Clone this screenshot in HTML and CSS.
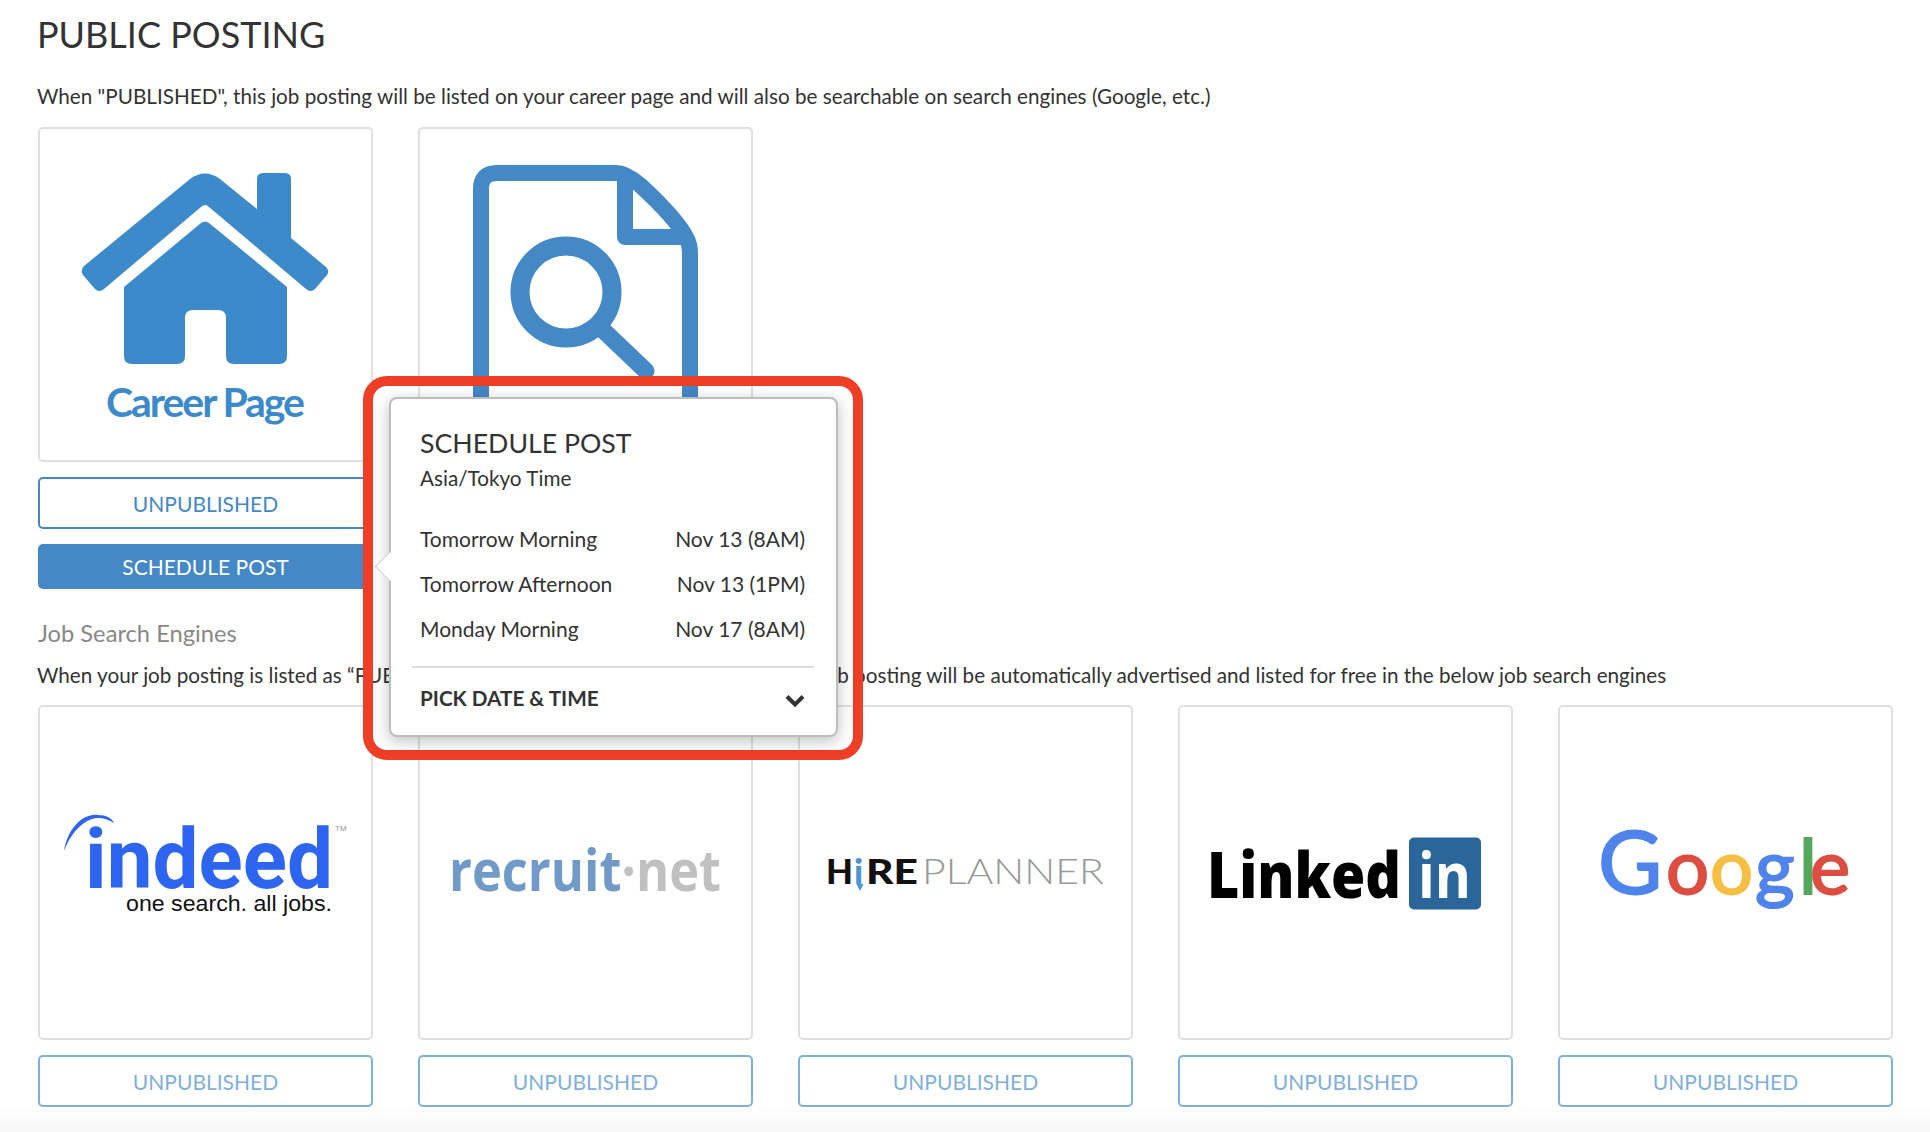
FILE: index.html
```html
<!DOCTYPE html>
<html lang="en">
  <head>
    <meta charset="UTF-8" />
    <meta name="viewport" content="width=device-width, initial-scale=1.0" />
    <title>Public Posting</title>
    <link rel="stylesheet" href="styles.css">
  </head>
  <body>
    <div class="container">
      <h1>PUBLIC POSTING</h1>
      <p class="note note-first">When "PUBLISHED", this job posting will be listed on your career page and will also be searchable on search engines (Google, etc.)</p>

      <!-- Public posting cards -->
      <div class="card-row">
        <div class="channel">
          <div class="card">
            <svg class="logo" viewBox="0 0 334 334">
              <path fill="#3d8aca" d="M46 139 L152 52 Q167 41 182 52 L219 82 L219 52 Q219 46 225 46 L247 46 Q253 46 253 52 L253 111 L288 140 Q292 144 289 148 L277 162 Q273 166 268 162 L171 80 Q167 76 163 80 L66 162 Q61 166 57 162 L45 148 Q42 143 46 139 Z"/>
              <path fill="#3d8aca" d="M86 160 L163 96 Q167 93 171 96 L249 160 L249 229 Q249 237 241 237 L196 237 Q188 237 188 229 L188 191 Q188 183 180 183 L155 183 Q147 183 147 191 L147 229 Q147 237 139 237 L94 237 Q86 237 86 229 Z"/>
              <text class="career-text" x="68" y="290" textLength="199">Career Page</text>
            </svg>
          </div>
          <button class="status-btn" type="button">UNPUBLISHED</button>
          <button class="schedule-btn" type="button">SCHEDULE POST</button>
        </div>
        <div class="channel">
          <div class="card">
            <svg class="logo" viewBox="0 0 334 334">
              <path fill="none" stroke="#4488c6" stroke-width="16" d="M63 300 L63 62 Q63 46 79 46 L198 46 Q208 46 222 58 Q259 92 269 112 Q272 118 272 126 L272 300"/>
              <path fill="none" stroke="#4488c6" stroke-width="16" stroke-linejoin="round" d="M207 46 L207 110 L272 110"/>
              <circle cx="148" cy="165" r="46" fill="none" stroke="#4488c6" stroke-width="19"/>
              <path fill="none" stroke="#4488c6" stroke-width="17" stroke-linecap="round" d="M186 204 L228 244"/>
            </svg>
          </div>
        </div>
      </div>

      <!-- Job search engines -->
      <h2>Job Search Engines</h2>
      <p class="note">When your job posting is listed as “PUBLISHED” on your career page above, then your job posting will be automatically advertised and listed for free in the below job search engines</p>
      <div class="card-row">
        <div class="channel">
          <div class="card">
            <svg class="logo" viewBox="0 0 334 334">
              <path fill="#2e65f0" d="M26 146 C30 122 46 108 60 110 C68 110 74 113 76 118 C68 113 60 112 54 114 C42 118 32 130 26 146 Z"/>
              <text class="indeed-word" x="47" y="183" textLength="248" lengthAdjust="spacingAndGlyphs">indeed</text>
              <text class="indeed-tm" x="297" y="126">TM</text>
              <text class="indeed-tag" x="88" y="205.5" textLength="206" lengthAdjust="spacingAndGlyphs">one search. all jobs.</text>
            </svg>
          </div>
          <button class="status-btn faded" type="button">UNPUBLISHED</button>
        </div>
        <div class="channel">
          <div class="card">
            <svg class="logo" viewBox="0 0 334 334">
              <text class="recruit-word" x="31" y="186" textLength="272" lengthAdjust="spacingAndGlyphs"><tspan fill="#709ac8">recruit</tspan><tspan fill="#c0c0c0">·net</tspan></text>
            </svg>
          </div>
          <button class="status-btn faded" type="button">UNPUBLISHED</button>
        </div>
        <div class="channel">
          <div class="card">
            <svg class="logo" viewBox="0 0 334 334">
              <text class="hire-bold" x="28" y="179" textLength="27" lengthAdjust="spacingAndGlyphs">H</text>
              <text class="hire-bold hire-tie" x="56" y="179">i</text>
              <path fill="#4c94d2" d="M58.5 179 L65.5 179 L62 186 Z"/>
              <text class="hire-bold" x="68" y="179" textLength="52" lengthAdjust="spacingAndGlyphs">RE</text>
              <text class="hire-thin" x="124" y="179" textLength="182" lengthAdjust="spacingAndGlyphs">PLANNER</text>
            </svg>
          </div>
          <button class="status-btn faded" type="button">UNPUBLISHED</button>
        </div>
        <div class="channel">
          <div class="card">
            <svg class="logo" viewBox="0 0 334 334">
              <text class="linked-word" x="29" y="192.5" textLength="194" lengthAdjust="spacingAndGlyphs">Linked</text>
              <rect x="231" y="132.5" width="72" height="72" rx="5" fill="#2a6699"/>
              <text class="linked-in" x="240" y="192.5" textLength="53" lengthAdjust="spacingAndGlyphs">in</text>
            </svg>
          </div>
          <button class="status-btn faded" type="button">UNPUBLISHED</button>
        </div>
        <div class="channel">
          <div class="card">
            <svg class="logo" viewBox="0 0 334 334">
              <text class="google-word" y="189"><tspan class="google-cap" x="40" fill="#4f84ec" stroke="#4f84ec">G</tspan><tspan x="108" fill="#dc4e41" stroke="#dc4e41">o</tspan><tspan x="152" fill="#f4bf42" stroke="#f4bf42">o</tspan><tspan x="197" fill="#4f84ec" stroke="#4f84ec">g</tspan><tspan x="241" fill="#55a85a" stroke="#55a85a">l</tspan><tspan x="252" fill="#dc4e41" stroke="#dc4e41">e</tspan></text>
            </svg>
          </div>
          <button class="status-btn faded" type="button">UNPUBLISHED</button>
        </div>
      </div>
    </div>

    <!-- Schedule popover, with the red annotation round it -->
    <div class="callout">
      <div class="popover">
        <span class="arrow"></span>
        <h3>SCHEDULE POST</h3>
        <p class="zone">Asia/Tokyo Time</p>
        <ul class="slots">
          <li><span>Tomorrow Morning</span><span>Nov 13 (8AM)</span></li>
          <li><span>Tomorrow Afternoon</span><span>Nov 13 (1PM)</span></li>
          <li><span>Monday Morning</span><span>Nov 17 (8AM)</span></li>
        </ul>
        <div class="pick">
          <span>PICK DATE &amp; TIME</span>
          <svg class="chevron" viewBox="0 0 20 14"><path fill="none" stroke="#333" stroke-width="4" d="M2 2.5 L10 10.5 L18 2.5"/></svg>
        </div>
      </div>
    </div>
  </body>
</html>
```

FILE: styles.css
```css
* {
  box-sizing: border-box;
}

body {
  font-family: Lato, "Open Sans", sans-serif;
  background: linear-gradient(#fff 1105px, #f8f8f8 1132px);
  color: #333;
  margin: 0;
  height: 1132px;
  overflow: hidden;
  position: relative;
}

.container {
  padding: 12px 37px 0 38px;
}

h1 {
  font-size: 36px;
  font-weight: 400;
  line-height: 44px;
  margin: 0 0 27px -1px;
  color: #333;
}

h2 {
  font-size: 23.7px;
  font-weight: 400;
  line-height: 30px;
  color: #888;
  margin: 29px 0 14px;
}

.note {
  font-size: 20.7px;
  line-height: 26px;
  margin: 0 0 17px -1px;
  color: #333;
}

.note-first {
  margin-bottom: 18px;
}

.card-row {
  display: grid;
  grid-template-columns: repeat(5, 335px);
  column-gap: 45px;
}

.card {
  width: 335px;
  height: 335px;
  background-color: #fff;
  border: 2px solid #e0e0e0;
  border-radius: 5px;
  overflow: hidden;
}

.logo {
  display: block;
  width: 334px;
  height: 334px;
  margin: -2px;
}

.status-btn,
.schedule-btn {
  display: block;
  width: 100%;
  font-family: inherit;
  font-size: 21px;
  border-radius: 5px;
  padding: 0;
}

.status-btn {
  height: 52px;
  margin-top: 15px;
  background-color: #fff;
  color: #4488c6;
  border: 2px solid #4488c6;
}

.status-btn.faded {
  color: #7fb0da;
  border-color: #7fb0da;
}

.schedule-btn {
  height: 45px;
  margin-top: 15px;
  background-color: #4488c6;
  color: #fff;
  border: none;
}

/* logo lettering */
.career-text {
  font-family: Lato, sans-serif;
  font-weight: 700;
  font-size: 41px;
  fill: #3d8aca;
}

.indeed-word {
  font-family: Roboto, sans-serif;
  font-weight: 700;
  font-size: 84px;
  fill: #2e65f0;
}

.indeed-tm {
  font-family: "Liberation Sans", sans-serif;
  font-size: 8px;
  fill: #999;
}

.indeed-tag {
  font-family: "Liberation Sans", sans-serif;
  font-size: 22px;
  fill: #111;
}

.recruit-word {
  font-family: "Open Sans", sans-serif;
  font-weight: 700;
  font-size: 58px;
}

.hire-bold {
  font-family: Lato, sans-serif;
  font-weight: 900;
  font-size: 35px;
  fill: #111;
}

.hire-tie {
  fill: #4c94d2;
}

.hire-thin {
  font-family: Lato, sans-serif;
  font-weight: 300;
  font-size: 35px;
  fill: #999;
}

.linked-word {
  font-family: "Open Sans", sans-serif;
  font-weight: 800;
  font-size: 63px;
  fill: #000;
}

.linked-in {
  font-family: "Open Sans", sans-serif;
  font-weight: 700;
  font-size: 63px;
  fill: #fff;
}

.google-word {
  font-family: Lato, sans-serif;
  font-weight: 400;
  font-size: 76px;
  stroke-width: 2px;
}

.google-cap {
  font-size: 88px;
}

/* schedule popover */
.callout {
  position: absolute;
  left: 363px;
  top: 376px;
  width: 500px;
  height: 384px;
  border: 10px solid #ee3e26;
  border-radius: 24px;
  padding: 11px 16px;
}

.popover {
  position: relative;
  width: 449px;
  height: 340px;
  background-color: #fff;
  border: 2px solid #bdbdbd;
  border-radius: 8px;
  box-shadow: 0 4px 16px rgba(0, 0, 0, 0.25);
  padding: 27px 0 0;
}

.arrow {
  position: absolute;
  left: -12.5px;
  top: 156.5px;
  width: 21px;
  height: 21px;
  background-color: #fff;
  border-left: 1px solid #ccc;
  border-bottom: 1px solid #ccc;
  transform: rotate(45deg);
}

.popover h3 {
  font-size: 26.7px;
  font-weight: 400;
  line-height: 34px;
  margin: 0 29px;
  color: #333;
}

.zone {
  font-size: 20.7px;
  line-height: 26px;
  margin: 5px 29px 0;
}

.slots {
  list-style: none;
  margin: 25px 0 0;
  padding: 0 31px 0 29px;
}

.slots li {
  display: flex;
  justify-content: space-between;
  font-size: 21px;
  height: 45px;
  line-height: 45px;
  position: relative;
}

.pick {
  margin: 15px 22px 0 21px;
  border-top: 2px solid #ddd;
  padding: 17px 9px 0 8px;
  display: flex;
  justify-content: space-between;
  align-items: center;
  font-size: 20.7px;
  font-weight: 700;
  line-height: 26px;
}

.chevron {
  width: 20px;
  height: 14px;
  margin-top: 5px;
}
```
